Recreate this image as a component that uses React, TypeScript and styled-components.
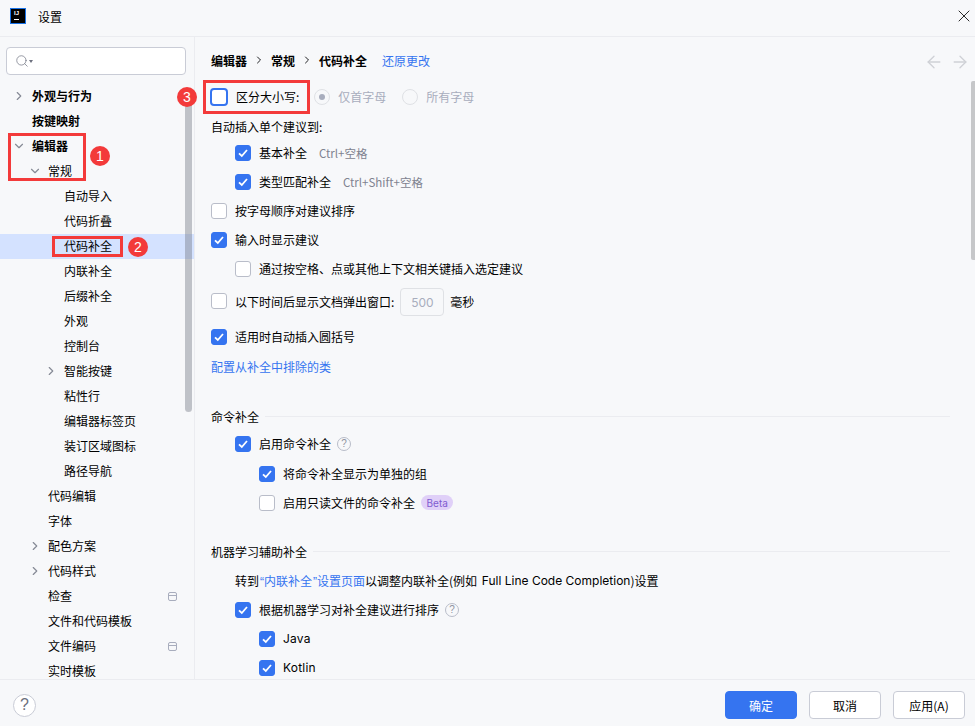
import { createGlobalStyle, styled } from "styled-components";
import { ChevronDown, ChevronRight, ArrowLeft, ArrowRight, X, Search } from "lucide-react";

const Global = createGlobalStyle`
  html, body {
    margin: 0;
    padding: 0;
  }
  body {
    font-family: "Noto Sans CJK SC", "Liberation Sans", sans-serif;
    font-size: 12px;
    color: #000;
    background: #f7f8fa;
  }
  * {
    box-sizing: border-box;
  }
`;

const Window = styled.div`
  position: relative;
  width: 975px;
  height: 726px;
  display: flex;
  flex-direction: column;
  overflow: hidden;
  background: #f7f8fa;
`;

const TitleBar = styled.div`
  height: 37px;
  flex: none;
  display: flex;
  align-items: center;
  padding: 0 1px 4px 10px;
  gap: 12px;
  border-bottom: 1px solid #ebecf0;
`;

const Logo = styled.div`
  width: 16px;
  height: 16px;
  background: #000;
  border: 1px solid #1a73e8;
  color: #fff;
  font: 700 6px/7px "Liberation Sans", sans-serif;
  padding: 1px 0 0 3px;
  display: flex;
  flex-direction: column;
  &::after {
    content: "";
    width: 5px;
    height: 1px;
    margin-top: 2px;
    background: #fff;
  }
`;

const Title = styled.div`
  flex: 1;
  margin-top: 1px;
`;

const Body = styled.div`
  flex: 1;
  min-height: 0;
  display: flex;
`;

const Sidebar = styled.aside`
  position: relative;
  width: 195px;
  flex: none;
  border-right: 1px solid #ebecf0;
  padding-top: 10px;
  overflow: hidden;
`;

const SearchBox = styled.div`
  width: 180px;
  height: 28px;
  margin-left: 6px;
  display: flex;
  align-items: center;
  padding-left: 8px;
  background: #fff;
  border: 1px solid #c9ccd6;
  border-radius: 4px;
  color: #6c707e;
  &::after {
    content: "";
    border-left: 2.5px solid transparent;
    border-right: 2.5px solid transparent;
    border-top: 3px solid #6c707e;
  }
`;

const Tree = styled.div`
  margin-top: 9px;
`;

const TreeRow = styled.div<{ $depth: number; $bold?: boolean; $selected?: boolean }>`
  position: relative;
  height: 25px;
  display: flex;
  align-items: center;
  padding-left: ${(p) => 32 + p.$depth * 16}px;
  padding-bottom: 2px;
  font-weight: ${(p) => (p.$bold ? 700 : 400)};
  background: ${(p) => (p.$selected ? "#d4e2ff" : "transparent")};
  white-space: nowrap;
`;

const Arrow = styled.span<{ $depth: number }>`
  position: absolute;
  left: ${(p) => 12 + p.$depth * 16}px;
  top: 5px;
  width: 14px;
  height: 14px;
  display: flex;
  color: #868a96;
`;

const Pane = styled.span`
  position: absolute;
  left: 168px;
  top: 8px;
  width: 9px;
  height: 9px;
  border: 1px solid #a8adbd;
  border-radius: 2px;
  &::before {
    content: "";
    display: block;
    height: 2px;
    border-bottom: 1px solid #a8adbd;
  }
`;

const TreeScroll = styled.div`
  position: absolute;
  left: 185px;
  top: 52px;
  width: 7px;
  height: 323px;
  background: rgba(115, 119, 130, 0.42);
  border-radius: 4px;
`;

const Main = styled.main`
  position: relative;
  flex: 1;
  min-width: 0;
  overflow: hidden;
  padding: 13px 25px 0 16px;
`;

const Crumbs = styled.div`
  height: 20px;
  display: flex;
  align-items: center;
  font-weight: 700;
`;

const CrumbSep = styled.span`
  display: flex;
  margin: 0 6px;
  color: #1e1f22;
`;

const Revert = styled.a`
  margin-left: 15px;
  font-weight: 400;
  color: #3574f0;
`;

const HistoryNav = styled.div`
  position: absolute;
  top: 15px;
  right: 5px;
  display: flex;
  gap: 6px;
  color: #cfd1d6;
`;

const Rows = styled.div`
  margin-top: 12px;
`;

const Row = styled.div<{ $indent?: number; $h?: number; $top?: number }>`
  height: ${(p) => p.$h ?? 29}px;
  margin-top: ${(p) => p.$top ?? 0}px;
  padding-left: ${(p) => (p.$indent ?? 0) * 24}px;
  display: flex;
  align-items: center;
  white-space: nowrap;
`;

const Check = styled.span<{ $on?: boolean; $focus?: boolean }>`
  width: 16px;
  height: 16px;
  flex: none;
  margin-right: 8px;
  display: flex;
  align-items: center;
  justify-content: center;
  border-radius: 3px;
  background: ${(p) => (p.$on ? "#3574f0" : "#fff")};
  border: 1px solid ${(p) => (p.$on ? "#3574f0" : "#b9bdc9")};
  ${(p) =>
    p.$focus &&
    `
    width: 18px;
    height: 18px;
    margin: 0 8px 0 -1px;
    border: 2px solid #3574f0;
    border-radius: 4px;
  `}
`;

const Radio = styled.span<{ $dot?: boolean }>`
  width: 16px;
  height: 16px;
  flex: none;
  margin-right: 8px;
  display: flex;
  align-items: center;
  justify-content: center;
  border-radius: 50%;
  border: 1px solid #dfe1e5;
  &::after {
    content: "";
    display: ${(p) => (p.$dot ? "block" : "none")};
    width: 6px;
    height: 6px;
    border-radius: 50%;
    background: #a8adbd;
  }
`;

const CaseLabel = styled.span`
  margin-right: 15px;
`;

const RadioLabel = styled.span<{ $gap: number }>`
  color: #a8adbd;
  margin-right: ${(p) => p.$gap}px;
`;

const Hint = styled.span`
  margin-left: 12px;
  font-size: 11.5px;
  color: #7f8390;
`;

const Link = styled.a`
  color: #3574f0;
`;

const MsInput = styled.span`
  width: 44px;
  height: 28px;
  margin: 2px 6px 0 6px;
  display: flex;
  align-items: center;
  justify-content: center;
  border: 1px solid #dfe1e5;
  border-radius: 4px;
  color: #a8adbd;
  font-family: "Inter", sans-serif;
`;

const Help = styled.span`
  width: 14px;
  height: 14px;
  margin-left: 6px;
  display: flex;
  align-items: center;
  justify-content: center;
  border: 1px solid #b9bdc9;
  border-radius: 50%;
  font: 10px "Liberation Sans", sans-serif;
  color: #8f93a0;
`;

const Beta = styled.span`
  margin-left: 6px;
  height: 15px;
  padding: 0 5.5px;
  display: flex;
  align-items: center;
  border-radius: 8px;
  background: #e0d0f8;
  color: #7f5bd0;
  font: 10px "Inter", sans-serif;
`;

const Section = styled.div<{ $top: number }>`
  margin-top: ${(p) => p.$top}px;
  height: 20px;
  display: flex;
  align-items: center;
  gap: 6px;
  white-space: nowrap;
  &::after {
    content: "";
    flex: 1;
    height: 1px;
    background: #ebecf0;
  }
`;

const Latin = styled.span<{ $phrase?: boolean }>`
  font-family: "Inter", "Noto Sans CJK SC", sans-serif;
  letter-spacing: ${(p) => (p.$phrase ? 0 : 0.2)}px;
  margin-left: ${(p) => (p.$phrase ? 2 : 0)}px;
`;

const Quote = styled.span`
  padding-left: 1px;
  font-family: "Liberation Sans", sans-serif;
`;

const RightScroll = styled.div`
  position: absolute;
  right: 0;
  top: 44px;
  width: 4px;
  height: 179px;
  background: #c6c7c9;
  border-radius: 2px 0 0 2px;
`;

const Footer = styled.footer`
  height: 47px;
  flex: none;
  border-top: 1px solid #ebecf0;
  display: flex;
  align-items: center;
  padding: 4px 10px 0 13px;
  gap: 12px;
`;

const HelpButton = styled.span`
  width: 23px;
  height: 23px;
  margin-right: auto;
  display: flex;
  align-items: center;
  justify-content: center;
  background: #fff;
  border: 1px solid #c9ccd6;
  border-radius: 50%;
  color: #6c707e;
  font: 16px "Liberation Sans", sans-serif;
`;

const Button = styled.button<{ $primary?: boolean }>`
  width: 72px;
  height: 28px;
  padding: 0;
  font: inherit;
  border-radius: 4px;
  border: 1px solid ${(p) => (p.$primary ? "#3574f0" : "#c9ccd6")};
  background: ${(p) => (p.$primary ? "#3574f0" : "#fff")};
  color: ${(p) => (p.$primary ? "#fff" : "#000")};
`;

const Mark = styled.div<{ $x: number; $y: number; $w: number; $h: number }>`
  position: absolute;
  left: ${(p) => p.$x}px;
  top: ${(p) => p.$y}px;
  width: ${(p) => p.$w}px;
  height: ${(p) => p.$h}px;
  border: 3px solid #f33a3a;
`;

const Badge = styled.div<{ $x: number; $y: number }>`
  position: absolute;
  left: ${(p) => p.$x}px;
  top: ${(p) => p.$y}px;
  width: 20px;
  height: 20px;
  display: flex;
  align-items: center;
  justify-content: center;
  border-radius: 50%;
  background: #f33a3a;
  color: #fff;
  font: 14px "Liberation Sans", sans-serif;
`;

type Node = { label: string; depth: number; bold?: boolean; arrow?: "r" | "d"; selected?: boolean; pane?: boolean };

const nodes: Node[] = [
  { label: "外观与行为", depth: 0, bold: true, arrow: "r" },
  { label: "按键映射", depth: 0, bold: true },
  { label: "编辑器", depth: 0, bold: true, arrow: "d" },
  { label: "常规", depth: 1, arrow: "d" },
  { label: "自动导入", depth: 2 },
  { label: "代码折叠", depth: 2 },
  { label: "代码补全", depth: 2, selected: true },
  { label: "内联补全", depth: 2 },
  { label: "后缀补全", depth: 2 },
  { label: "外观", depth: 2 },
  { label: "控制台", depth: 2 },
  { label: "智能按键", depth: 2, arrow: "r" },
  { label: "粘性行", depth: 2 },
  { label: "编辑器标签页", depth: 2 },
  { label: "装订区域图标", depth: 2 },
  { label: "路径导航", depth: 2 },
  { label: "代码编辑", depth: 1 },
  { label: "字体", depth: 1 },
  { label: "配色方案", depth: 1, arrow: "r" },
  { label: "代码样式", depth: 1, arrow: "r" },
  { label: "检查", depth: 1, pane: true },
  { label: "文件和代码模板", depth: 1 },
  { label: "文件编码", depth: 1, pane: true },
  { label: "实时模板", depth: 1 },
];

function Tick({ on, focus }: { on?: boolean; focus?: boolean }) {
  return (
    <Check $on={on} $focus={focus}>
      {on && (
        <svg width="12" height="12" viewBox="0 0 12 12" fill="none">
          <path d="M2 6.4 L4.8 9 L10 3" stroke="#fff" strokeWidth="1.8" />
        </svg>
      )}
    </Check>
  );
}

export default function App() {
  return (
    <Window>
      <Global />
      <TitleBar>
        <Logo>IJ</Logo>
        <Title>设置</Title>
        <X size={20} strokeWidth={1} color="#000" />
      </TitleBar>
      <Body>
        <Sidebar>
          <SearchBox>
            <Search size={14} strokeWidth={1.2} />
          </SearchBox>
          <Tree>
            {nodes.map((n) => (
              <TreeRow key={n.label} $depth={n.depth} $bold={n.bold} $selected={n.selected}>
                {n.arrow && (
                  <Arrow $depth={n.depth}>
                    {n.arrow === "r" ? <ChevronRight size={14} /> : <ChevronDown size={14} />}
                  </Arrow>
                )}
                {n.label}
                {n.pane && <Pane />}
              </TreeRow>
            ))}
          </Tree>
          <TreeScroll />
        </Sidebar>
        <Main>
          <Crumbs>
            编辑器
            <CrumbSep><ChevronRight size={12} strokeWidth={2} /></CrumbSep>
            常规
            <CrumbSep><ChevronRight size={12} strokeWidth={2} /></CrumbSep>
            代码补全
            <Revert>还原更改</Revert>
          </Crumbs>
          <HistoryNav>
            <ArrowLeft size={20} strokeWidth={1.6} />
            <ArrowRight size={20} strokeWidth={1.6} />
          </HistoryNav>
          <Rows>
            <Row>
              <Tick focus />
              <CaseLabel>区分大小写:</CaseLabel>
              <Radio $dot />
              <RadioLabel $gap={16}>仅首字母</RadioLabel>
              <Radio />
              <RadioLabel $gap={0}>所有字母</RadioLabel>
            </Row>
            <Row $h={23} $top={4}>自动插入单个建议到:</Row>
            <Row $indent={1}><Tick on />基本补全<Hint>Ctrl+空格</Hint></Row>
            <Row $indent={1}><Tick on />类型匹配补全<Hint>Ctrl+Shift+空格</Hint></Row>
            <Row><Tick />按字母顺序对建议排序</Row>
            <Row><Tick on />输入时显示建议</Row>
            <Row $indent={1}><Tick />通过按空格、点或其他上下文相关键插入选定建议</Row>
            <Row $h={36}>
              <Tick />以下时间后显示文档弹出窗口:
              <MsInput>500</MsInput>
              毫秒
            </Row>
            <Row $h={33} $top={1}><Tick on />适用时自动插入圆括号</Row>
            <Row $h={27}><Link>配置从补全中排除的类</Link></Row>
            <Section $top={26}>命令补全</Section>
            <Row $indent={1} $top={3}><Tick on />启用命令补全<Help>?</Help></Row>
            <Row $indent={2} $top={1}><Tick on />将命令补全显示为单独的组</Row>
            <Row $indent={2}><Tick />启用只读文件的命令补全<Beta>Beta</Beta></Row>
            <Section $top={24}>机器学习辅助补全</Section>
            <Row $indent={1} $top={5}>
              转到<Link><Quote>“</Quote>内联补全<Quote>”</Quote>设置页面</Link>以调整内联补全(例如&nbsp;<Latin $phrase>Full Line Code Completion</Latin>)设置
            </Row>
            <Row $indent={1}><Tick on />根据机器学习对补全建议进行排序<Help>?</Help></Row>
            <Row $indent={2}><Tick on /><Latin>Java</Latin></Row>
            <Row $indent={2}><Tick on /><Latin>Kotlin</Latin></Row>
          </Rows>
          <RightScroll />
        </Main>
      </Body>
      <Footer>
        <HelpButton>?</HelpButton>
        <Button $primary>确定</Button>
        <Button>取消</Button>
        <Button>应用(A)</Button>
      </Footer>
      <Mark $x={8} $y={133} $w={78} $h={48} />
      <Mark $x={52} $y={236} $w={71} $h={21} />
      <Mark $x={203} $y={80} $w={107} $h={34} />
      <Badge $x={90} $y={146}>1</Badge>
      <Badge $x={128} $y={237}>2</Badge>
      <Badge $x={177} $y={87}>3</Badge>
    </Window>
  );
}
